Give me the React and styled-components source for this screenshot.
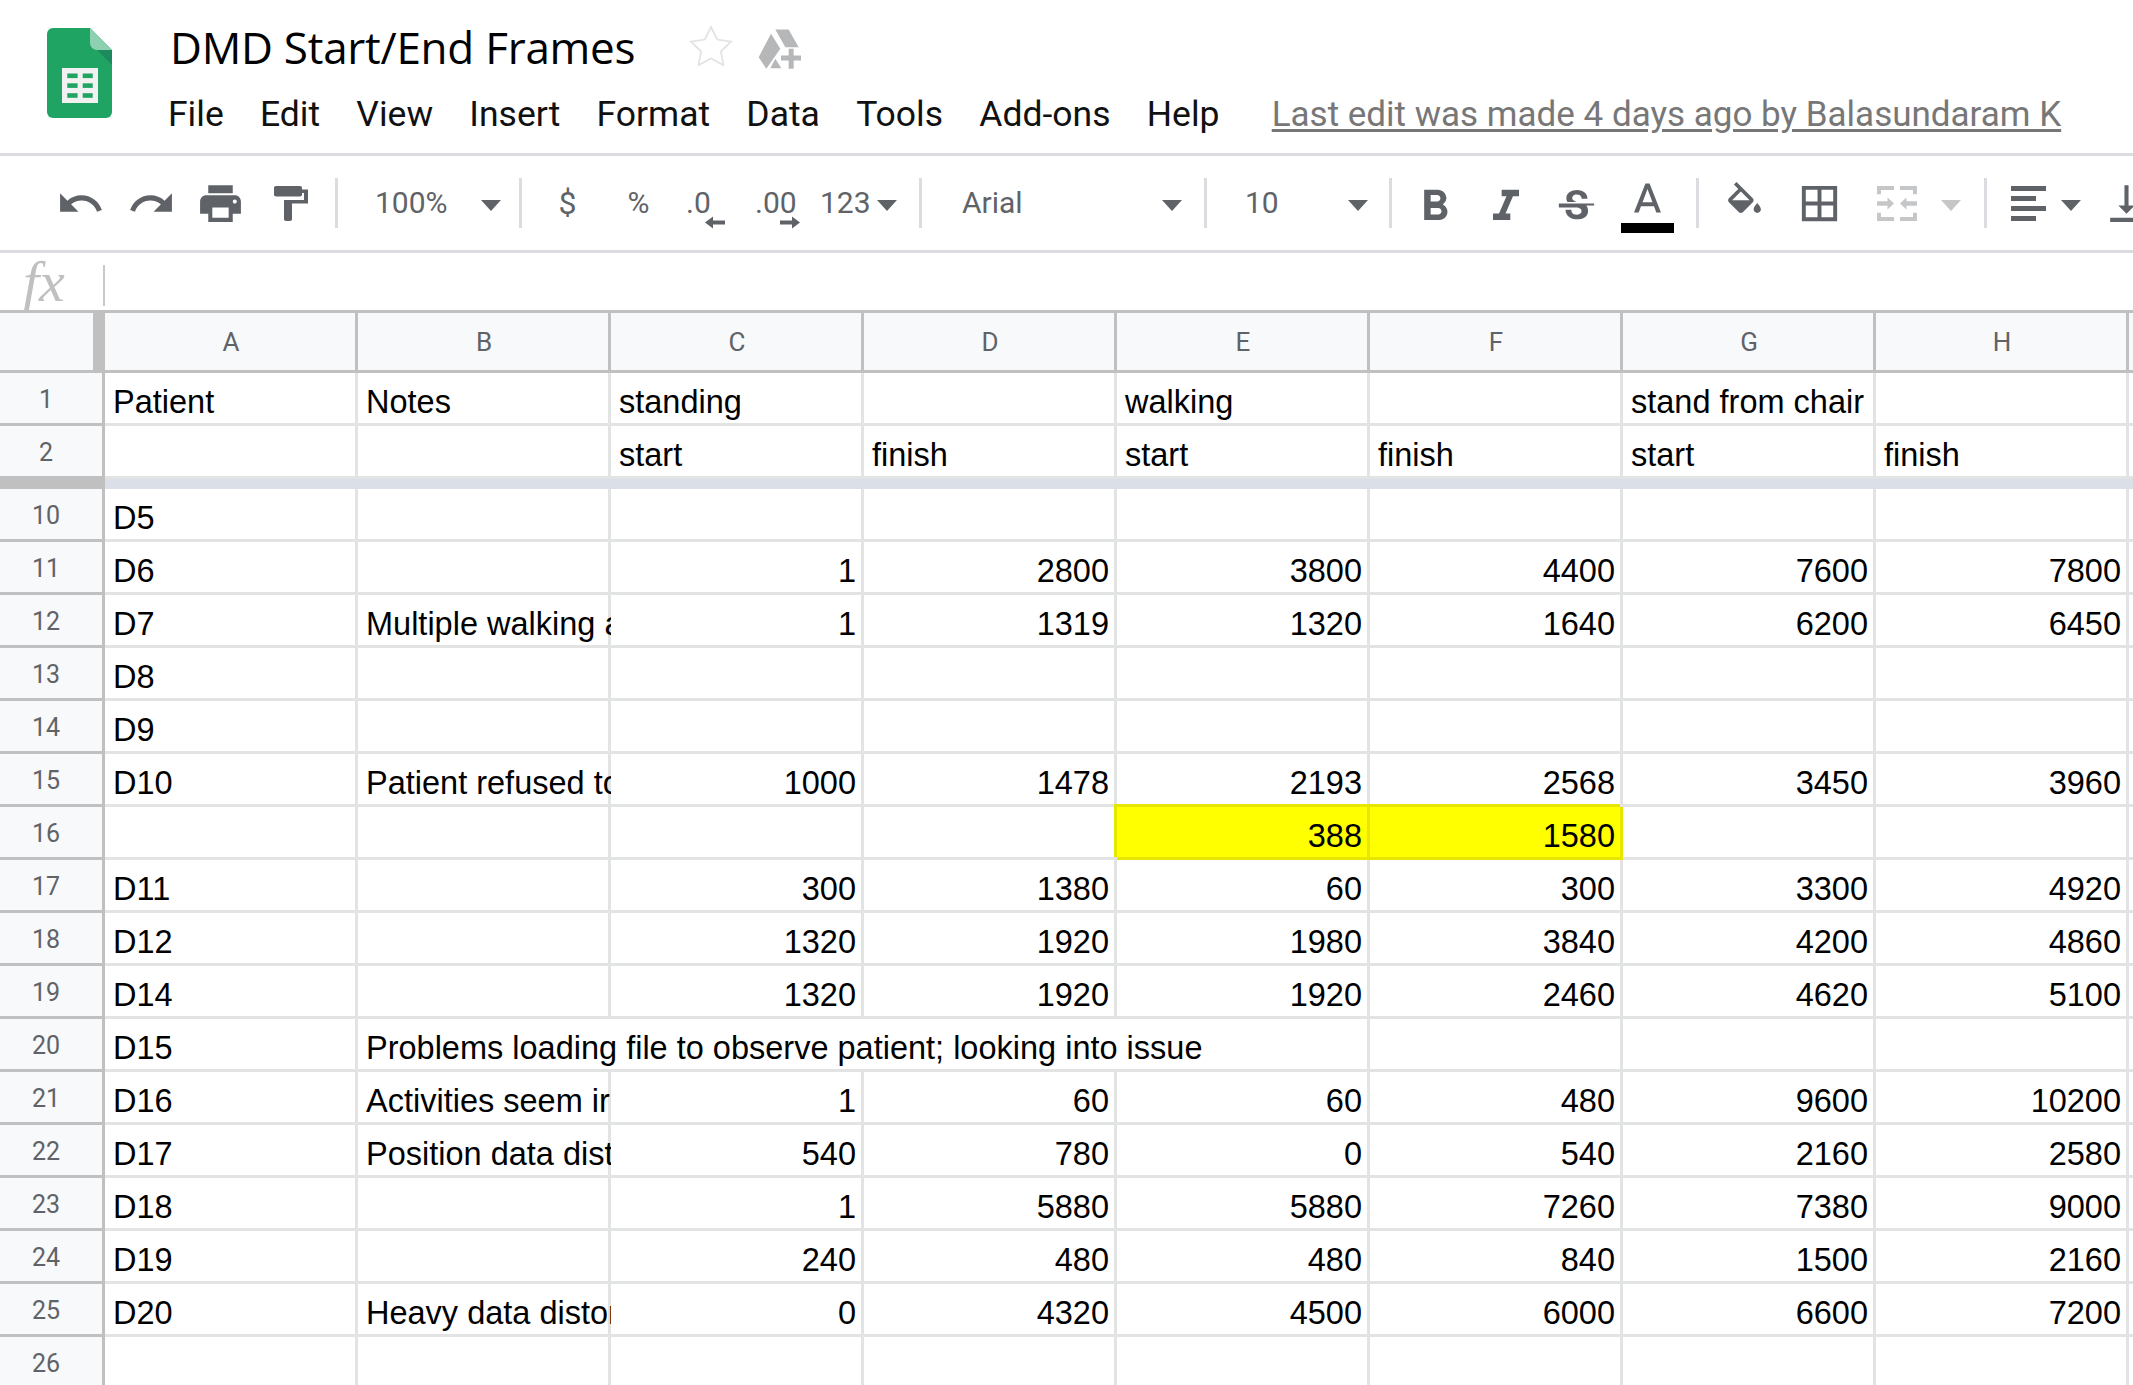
import React from 'react';
import styled, { createGlobalStyle } from 'styled-components';

const Global = createGlobalStyle`
  html, body { margin: 0; padding: 0; background: #fff; overflow: hidden; }
  body { width: 2133px; height: 1385px; }
  * { box-sizing: border-box; }
`;

const Page = styled.div`
  width: 2133px;
  height: 1385px;
  overflow: hidden;
  font-family: Roboto, "Liberation Sans", sans-serif;
`;

/* ---------- top bar ---------- */
const TopBar = styled.header`
  height: 156px;
  border-bottom: 3px solid #dadce0;
  display: flex;
  align-items: flex-start;
  padding: 28px 0 0 47px;
`;
const LogoSvg = styled.svg`
  width: 65px;
  height: 90px;
  flex: none;
`;
const TitleColumn = styled.div`
  margin-left: 56px;
  display: flex;
  flex-direction: column;
`;
const TitleRow = styled.div`
  height: 63px;
  display: flex;
  align-items: flex-start;
`;
const DocTitle = styled.div`
  font-family: "Open Sans", Roboto, sans-serif;
  font-size: 44px;
  line-height: 44px;
  margin: -3px 0 0 2px;
  color: #000;
  width: 520px;
  letter-spacing: -0.25px;
  white-space: nowrap;
`;
const StarSvg = styled.svg`
  width: 48px;
  height: 48px;
  margin: -5px 0 0 -3px;
  flex: none;
`;
const DriveSvg = styled.svg`
  width: 45px;
  height: 42px;
  margin-left: 22px;
  flex: none;
`;
const MenuRow = styled.nav`
  display: flex;
  align-items: baseline;
  gap: 36.25px;
  margin-left: 0;
  font-size: 35.5px;
  line-height: 46px;
  color: #111;
`;
const LastEdit = styled.a`
  margin-left: 16px;
  color: #777;
  font-size: 35px;
  text-decoration: underline;
  text-underline-offset: 3px;
  white-space: nowrap;
`;

/* ---------- toolbar ---------- */
const Toolbar = styled.div`
  height: 97px;
  border-bottom: 3px solid #dadce0;
  display: flex;
  align-items: center;
  padding-left: 45px;
  overflow: hidden;
  color: #5f6368;
`;
const Tool = styled.div`
  width: ${p => p.$w}px;
  flex: none;
  display: flex;
  align-items: center;
  justify-content: ${p => (p.$pl !== undefined ? 'flex-start' : 'center')};
  padding-left: ${p => p.$pl || 0}px;
  margin-top: ${p => p.$mt || 0}px;
  position: relative;
  font-size: ${p => p.$fs || 30}px;
  line-height: 40px;
`;
const Icon = styled.svg`
  flex: none;
  fill: ${p => p.$c || '#5f6368'};
  margin-left: ${p => p.$ml || 0}px;
`;
const Sep = styled.div`
  width: 3px;
  height: 50px;
  background: #dadce0;
  flex: none;
  margin: 0 ${p => p.$mr ?? 0}px 0 ${p => p.$ml ?? 0}px;
`;
const Drop = styled.div`
  width: ${p => p.$w}px;
  flex: none;
  display: flex;
  align-items: center;
  justify-content: space-between;
  padding: 0 ${p => p.$pr}px 0 ${p => p.$pl}px;
  font-size: 30px;
  line-height: 40px;
`;
const Caret = styled.span`
  display: block;
  flex: none;
  width: 0;
  height: 0;
  border-left: 10px solid transparent;
  border-right: 10px solid transparent;
  border-top: 11px solid ${p => p.$c || '#5f6368'};
  margin-left: ${p => p.$ml || 0}px;
  margin-top: 4px;
`;
const DecArrow = styled.svg`
  position: absolute;
  width: 20px;
  height: 13px;
  left: ${p => p.$l}px;
  top: 33px;
  fill: #5f6368;
`;
const ColorStack = styled.div`
  display: flex;
  flex-direction: column;
  align-items: center;
  gap: 10px;
`;
const ColorBar = styled.div`
  width: 53px;
  height: 10px;
  background: #000;
`;
const AlignGroup = styled.div`
  display: flex;
  align-items: center;
  padding-left: 24px;
  flex: none;
`;

/* ---------- formula bar ---------- */
const FormulaBar = styled.div`
  height: 57px;
  display: flex;
  align-items: center;
  padding-left: 23px;
`;
const Fx = styled.span`
  font-family: "Liberation Serif", serif;
  font-style: italic;
  font-size: 58px;
  line-height: 50px;
  color: #c0c0c0;
  width: 80px;
  flex: none;
`;
const FxSep = styled.div`
  width: 2px;
  height: 41px;
  margin-top: 7px;
  background: #c8c8c8;
`;

/* ---------- sheet ---------- */
const Sheet = styled.div`
  display: grid;
  grid-template-columns: 105px repeat(8, 253px) 1fr;
  grid-template-rows: 63px 53px 53px 10px;
  grid-auto-rows: 53px;
`;
const Corner = styled.div`
  background: #f8f9fa;
  border-top: 3px solid #c0c0c0;
  border-bottom: 3px solid #c0c0c0;
  border-right: 12px solid #c0c0c0;
`;
const ColHead = styled.div`
  background: #f8f9fa;
  border-top: 3px solid #c0c0c0;
  border-bottom: 3px solid #c0c0c0;
  border-right: 3px solid #c0c0c0;
  color: #5f6368;
  font-size: 26px;
  line-height: 58px;
  text-align: center;
  padding-left: 2px;
`;
const RowHead = styled.div`
  background: #f8f9fa;
  border-right: 3px solid #c0c0c0;
  border-bottom: 3px solid #c0c0c0;
  color: #5f6368;
  font-size: 25px;
  line-height: 54px;
  text-align: center;
  padding-right: 10px;
  overflow: hidden;
`;
const Cell = styled.div`
  grid-column: ${p => (p.$span ? `span ${p.$span}` : 'auto')};
  border-bottom: 3px solid ${p => (p.$hl ? '#e6e600' : '#e2e3e3')};
  font-family: "Liberation Sans", Arial, sans-serif;
  font-size: 32.5px;
  line-height: 50px;
  padding: 4px ${p => (p.$num ? 8 : 0)}px 0 ${p => (p.$num ? 0 : 8)}px;
  color: #000;
  text-align: ${p => (p.$num ? 'right' : 'left')};
  white-space: nowrap;
  overflow: hidden;
  background: ${p => (p.$hl ? '#ffff00' : '#fff')};
  box-shadow: ${p => (p.$hl
    ? 'inset -3px 0 0 0 #e6e600, -3px -3px 0 0 #e6e600'
    : 'inset -3px 0 0 0 #e2e3e3')};
`;
const BandGutter = styled.div`
  background: #c0c0c0;
`;
const Band = styled.div`
  grid-column: 2 / -1;
  background: #dadfe8;
`;

/* ---------- data ---------- */
const rows = [
  ['1', 'Patient', 'Notes', 'standing', '', 'walking', '', 'stand from chair', ''],
  ['2', '', '', 'start', 'finish', 'start', 'finish', 'start', 'finish'],
  'band',
  ['10', 'D5', '', '', '', '', '', '', ''],
  ['11', 'D6', '', 1, 2800, 3800, 4400, 7600, 7800],
  ['12', 'D7', 'Multiple walking attempts', 1, 1319, 1320, 1640, 6200, 6450],
  ['13', 'D8', '', '', '', '', '', '', ''],
  ['14', 'D9', '', '', '', '', '', '', ''],
  ['15', 'D10', 'Patient refused to walk', 1000, 1478, 2193, 2568, 3450, 3960],
  ['16', '', '', '', '', 388, 1580, '', ''],
  ['17', 'D11', '', 300, 1380, 60, 300, 3300, 4920],
  ['18', 'D12', '', 1320, 1920, 1980, 3840, 4200, 4860],
  ['19', 'D14', '', 1320, 1920, 1920, 2460, 4620, 5100],
  'issue',
  ['21', 'D16', 'Activities seem irregular', 1, 60, 60, 480, 9600, 10200],
  ['22', 'D17', 'Position data distorted', 540, 780, 0, 540, 2160, 2580],
  ['23', 'D18', '', 1, 5880, 5880, 7260, 7380, 9000],
  ['24', 'D19', '', 240, 480, 480, 840, 1500, 2160],
  ['25', 'D20', 'Heavy data distortion', 0, 4320, 4500, 6000, 6600, 7200],
  ['26', '', '', '', '', '', '', '', ''],
];

const Logo = () => (
  <LogoSvg viewBox="0 0 65 90">
    <path d="M6 0H43L65 22V84a6 6 0 0 1-6 6H6a6 6 0 0 1-6-6V6a6 6 0 0 1 6-6z" fill="#20a464" />
    <path d="M50 22L65 37V22z" fill="#1c8a5c" />
    <path d="M43 0L65 22H50a7 7 0 0 1-7-7z" fill="#8ed1b1" />
    <rect x="15" y="40" width="36" height="35" fill="#f1f1f1" />
    {[45.5, 55.3, 65.2].map(y => (
      <g key={y} fill="#20a464">
        <rect x="20.3" y={y} width="10.3" height="4.6" />
        <rect x="35.7" y={y} width="10" height="4.6" />
      </g>
    ))}
  </LogoSvg>
);

const Glyph = ({ d, size = 49, vb = '0 0 24 24', c, w, h, ml, stretch }) => (
  <Icon viewBox={vb} width={w || size} height={h || size} $c={c} $ml={ml} preserveAspectRatio={stretch ? 'none' : undefined}>
    <path d={d} />
  </Icon>
);

const P = {
  undo: 'M12.5 8c-2.65 0-5.05.99-6.9 2.6L2 7v9h9l-3.62-3.62c1.39-1.16 3.16-1.88 5.12-1.88 3.54 0 6.55 2.31 7.6 5.5l2.37-.78C21.08 11.03 17.15 8 12.5 8z',
  redo: 'M18.4 10.6C16.55 8.99 14.15 8 11.5 8c-4.65 0-8.58 3.03-9.96 7.22L3.9 16c1.05-3.19 4.05-5.5 7.6-5.5 1.95 0 3.73.72 5.12 1.88L13 16h9V7l-3.6 3.6z',
  print: 'M19 8H5c-1.66 0-3 1.34-3 3v6h4v4h12v-4h4v-6c0-1.66-1.34-3-3-3zm-3 11H8v-5h8v5zm3-7c-.55 0-1-.45-1-1s.45-1 1-1 1 .45 1 1-.45 1-1 1zm-1-9H6v4h12V3z',
  paint: 'M18 4V3c0-.55-.45-1-1-1H5c-.55 0-1 .45-1 1v4c0 .55.45 1 1 1h12c.55 0 1-.45 1-1V6h1v4H9v11c0 .55.45 1 1 1h2c.55 0 1-.45 1-1v-9h8V4h-3z',
  bold: 'M15.6 10.79c.97-.67 1.65-1.77 1.65-2.79 0-2.26-1.75-4-4-4H7v14h7.04c2.09 0 3.71-1.7 3.71-3.79 0-1.52-.86-2.82-2.15-3.42zM10 6.5h3c.83 0 1.5.67 1.5 1.5s-.67 1.5-1.5 1.5h-3v-3zm3.5 9H10v-3h3.5c.83 0 1.5.67 1.5 1.5s-.67 1.5-1.5 1.5z',
  italic: 'M10 4v3h2.21l-3.42 8H6v3h8v-3h-2.21l3.42-8H18V4z',
  strike: 'M6.85 7.08C6.85 4.37 9.45 3 12.24 3c1.64 0 3 .49 3.9 1.28.77.65 1.46 1.73 1.46 3.24h-3.01c0-.31-.05-.59-.15-.85-.29-.86-1.2-1.28-2.25-1.28-1.86 0-2.34.98-2.34 1.83 0 .48.25.88.74 1.21.38.25.77.48 1.41.7H7.39c-.21-.34-.54-.89-.54-1.77zM21 12v-2H3v2h9.62c1.15.45 1.96.75 1.96 1.97 0 1-.81 1.67-2.28 1.67-1.54 0-2.93-.54-2.93-2.51H6.4c0 .55.08 1.13.24 1.58.81 2.29 3.22 3.33 5.67 3.33 2.6 0 5.58-1.07 5.58-4.31 0-.44-.01-1.66-.9-2.73H21z',
  colorA: 'M11 3L5.5 17h2.25l1.12-3h6.25l1.12 3h2.25L13 3h-2zm-1.38 9L12 5.67 14.38 12H9.62z',
  fill: 'M16.56 8.94L7.62 0 6.21 1.41l2.38 2.38-5.15 5.15c-.59.59-.59 1.54 0 2.12l5.5 5.5c.29.29.68.44 1.06.44s.77-.15 1.06-.44l5.5-5.5c.59-.58.59-1.53 0-2.12zM5.21 10L10 5.21 14.79 10H5.21zM19 11.5s-2 2.17-2 3.5c0 1.1.9 2 2 2s2-.9 2-2c0-1.33-2-3.5-2-3.5z',
  borders: 'M3 3v18h18V3H3zm8 16H5v-6h6v6zm0-8H5V5h6v6zm8 8h-6v-6h6v6zm0-8h-6V5h6v6z',
  merge: 'M48 50H100V62H60V75H48zM170 50H118V62H158V75H170zM48 157H100V145H60V132H48zM170 157H118V145H158V132H170zM48 97H80V85L100 103.5 80 122V110H48zM170 97H138V85L118 103.5 138 122V110H170z',
  align: 'M0 0H35V5H0zM0 10H25V15H0zM0 20H35V25H0zM0 30H25V35H0z',
  valign: 'M16 13h-3V3h-2v10H8l4 4 4-4zM4 19v2h16v-2H4z',
};

export default function App() {
  return (
    <Page>
      <Global />
      <TopBar>
        <Logo />
        <TitleColumn>
          <TitleRow>
            <DocTitle>DMD Start/End Frames</DocTitle>
            <StarSvg viewBox="0 0 24 24">
              <polygon points="12,2 15.09,8.26 22,9.27 17,14.14 18.18,21.02 12,17.77 5.82,21.02 7,14.14 2,9.27 8.91,8.26" fill="none" stroke="#e3e3e3" strokeWidth="0.9" />
            </StarSvg>
            <DriveSvg viewBox="230 38 135 125" fill="#b5b7b9">
              <path d="M235 125L272 55 300 100 258 160zM285 42H325L355 95H315zM270 158L285 130 303 158zM325 100H340V120H362V135H340V160H325V135H302V120H325z" />
            </DriveSvg>
          </TitleRow>
          <MenuRow>
            {['File', 'Edit', 'View', 'Insert', 'Format', 'Data', 'Tools', 'Add-ons', 'Help'].map(m => (
              <span key={m}>{m}</span>
            ))}
            <LastEdit>Last edit was made 4 days ago by Balasundaram K</LastEdit>
          </MenuRow>
        </TitleColumn>
      </TopBar>

      <Toolbar>
        <Tool $w={71}><Glyph d={P.undo} /></Tool>
        <Tool $w={71}><Glyph d={P.redo} /></Tool>
        <Tool $w={67}><Glyph d={P.print} /></Tool>
        <Tool $w={74}><Glyph d={P.paint} vb="4 2 17 20" w={34} h={35} stretch /></Tool>
        <Sep $ml={7} />
        <Drop $w={181} $pl={37} $pr={18}><span>100%</span><Caret /></Drop>
        <Sep />
        <Tool $w={91} $fs={32}>$</Tool>
        <Tool $w={51} $fs={30}>%</Tool>
        <Tool $w={76} $pl={22}>
          .0
          <DecArrow $l={41} viewBox="0 0 20 12"><path d="M0 6L8 0V4H20V8H8V12z" /></DecArrow>
        </Tool>
        <Tool $w={71} $pl={15}>
          .00
          <DecArrow $l={40} viewBox="0 0 20 12"><path d="M20 6L12 0V4H0V8H12V12z" /></DecArrow>
        </Tool>
        <Tool $w={108} $pl={9}>123<Caret $ml={6} /></Tool>
        <Sep />
        <Drop $w={282} $pl={40} $pr={22}><span>Arial</span><Caret /></Drop>
        <Sep />
        <Drop $w={182} $pl={38} $pr={21}><span>10</span><Caret /></Drop>
        <Sep $mr={7} />
        <Tool $w={71} $mt={8}><Glyph d={P.bold} size={52} /></Tool>
        <Tool $w={71} $mt={8}><Glyph d={P.italic} size={52} /></Tool>
        <Tool $w={71} $mt={8}><Glyph d={P.strike} size={47} /></Tool>
        <Tool $w={71} $mt={10}>
          <ColorStack>
            <Glyph d={P.colorA} vb="5.5 3 13 14" w={27} h={30} />
            <ColorBar />
          </ColorStack>
        </Tool>
        <Sep $ml={13} />
        <Tool $w={90} $mt={-11}><Glyph d={P.fill} vb="3 0 18 17" w={35} h={31} /></Tool>
        <Tool $w={61}><Glyph d={P.borders} size={47} /></Tool>
        <Tool $w={91} $pl={27}><Glyph d={P.merge} vb="48 50 122 107" w={40} h={35} c="#c5c6c8" /></Tool>
        <Tool $w={43} $pl={0}><Caret $c="#c5c6c8" /></Tool>
        <Sep />
        <AlignGroup>
          <Glyph d={P.align} vb="0 0 35 35" w={35} h={35} />
          <Caret $ml={15} />
          <Glyph d={P.valign} ml={21} />
        </AlignGroup>
      </Toolbar>

      <FormulaBar>
        <Fx>fx</Fx>
        <FxSep />
      </FormulaBar>

      <Sheet>
        <Corner />
        {['A', 'B', 'C', 'D', 'E', 'F', 'G', 'H', ''].map((c, i) => <ColHead key={i}>{c}</ColHead>)}
        {rows.map((row, i) => {
          if (row === 'band') {
            return (
              <React.Fragment key={i}>
                <BandGutter />
                <Band />
              </React.Fragment>
            );
          }
          if (row === 'issue') {
            return (
              <React.Fragment key={i}>
                <RowHead>20</RowHead>
                <Cell>D15</Cell>
                <Cell $span={4}>Problems loading file to observe patient; looking into issue</Cell>
                <Cell /><Cell /><Cell /><Cell />
              </React.Fragment>
            );
          }
          const [n, ...cells] = row;
          return (
            <React.Fragment key={i}>
              <RowHead>{n}</RowHead>
              {cells.map((v, j) => (
                <Cell key={j} $num={typeof v === 'number'} $hl={n === '16' && (j === 4 || j === 5)}>{v}</Cell>
              ))}
              <Cell />
            </React.Fragment>
          );
        })}
      </Sheet>
    </Page>
  );
}
